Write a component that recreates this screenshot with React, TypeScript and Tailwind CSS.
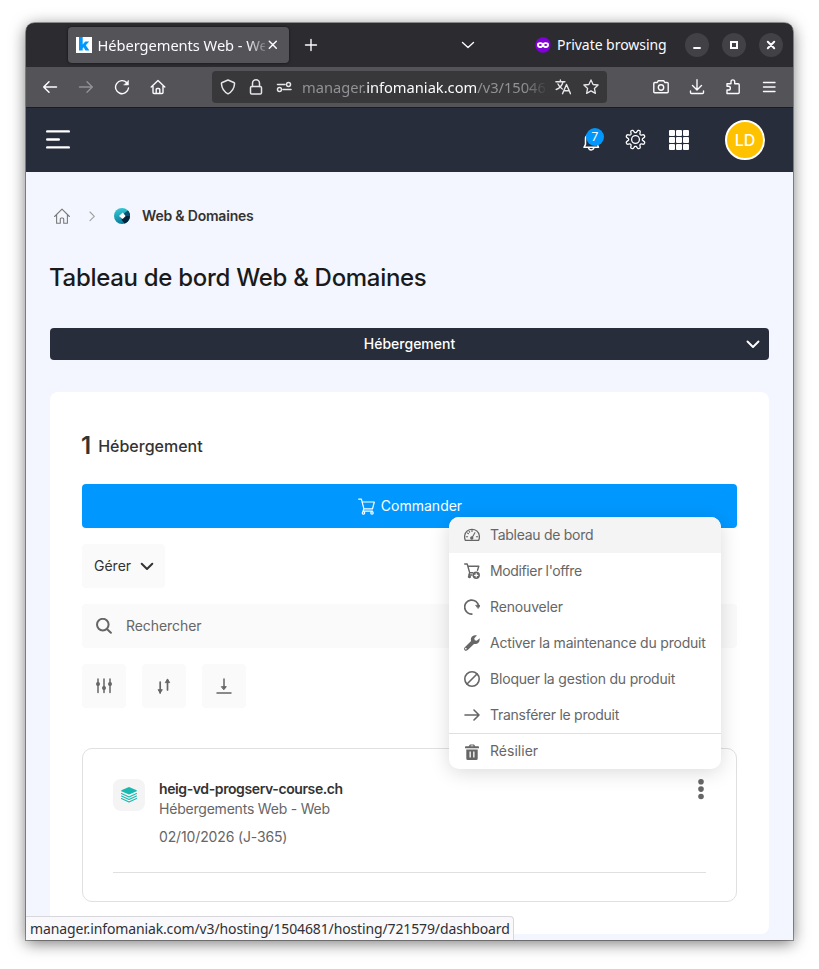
import type { ReactNode } from 'react';

type IconProps = { className?: string; children: ReactNode; size?: number; sw?: number };

function Icon({ className = '', children, size = 16, sw = 1.3 }: IconProps) {
  return (
    <svg
      width={size}
      height={size}
      viewBox={`0 0 ${size} ${size}`}
      fill="none"
      stroke="currentColor"
      strokeWidth={sw}
      strokeLinecap="round"
      strokeLinejoin="round"
      className={`shrink-0 ${className}`}
    >
      {children}
    </svg>
  );
}

function TabBar() {
  return (
    <div className="flex h-11 shrink-0 items-center bg-[#2c2b30] pl-[42px] text-[#fbfbfe]">
      <div className="flex h-9 w-[221px] items-center rounded bg-[#545358] pl-2 shadow-[0_0_3px_rgba(0,0,0,0.6)]">
        <svg width="16" height="16" viewBox="0 0 16 16" className="shrink-0">
          <rect width="16" height="16" fill="#fff" />
          <path d="M3 0h3.700v7.600L9.300 4.600h3.900L9.800 8.200l3.600 5.300H9.500L7.600 10.300l-.9.9v2.300H3z" fill="#0098ff" />
        </svg>
        <div className="ml-[5.500px] w-[167.500px] overflow-hidden whitespace-nowrap pb-px text-[14.67px] leading-5 tracking-[-0.050px] [mask-image:linear-gradient(to_right,black_149px,transparent_172px)]">
          Hébergements Web - Web
        </div>
        <Icon className="-mr-1" sw={1.5}>
          <path d="M4.300 4.300l7 7M11.300 4.300l-7 7" />
        </Icon>
      </div>
      <Icon className="ml-3.5" sw={1.4}>
        <path d="M8 2.500v11M2.500 8h11" />
      </Icon>
      <Icon className="ml-[141px]" sw={1.4}>
        <path d="M2.500 5.500L8 10.500l5.500-5" />
      </Icon>
      <svg width="16" height="16" viewBox="0 0 16 16" className="ml-[59px] shrink-0">
        <circle cx="8" cy="8" r="7.700" fill="#8000d7" />
        <path
          d="M8 6.200C6.800 4.900 2 4.400 2 7.700c0 3.900 4.400 4 6 2 1.600 2 6 1.900 6-2 0-3.300-4.800-2.800-6-1.500z"
          fill="#fff"
        />
        <ellipse cx="5.300" cy="7.900" rx="1.500" ry="1" fill="#8000d7" />
        <ellipse cx="10.700" cy="7.900" rx="1.500" ry="1" fill="#8000d7" />
      </svg>
      <span className="ml-1.5 w-32 whitespace-nowrap pb-px text-[14px] leading-5 tracking-[-0.040px]">Private browsing</span>
      <div className="flex gap-[13px]">
        <span className="flex size-6 items-center justify-center rounded-full bg-[#424146]">
          <Icon sw={2}><path d="M4.300 11h7.400" strokeLinecap="butt" /></Icon>
        </span>
        <span className="flex size-6 items-center justify-center rounded-full bg-[#424146]">
          <Icon sw={2}><path d="M5 5h6v6H5z" strokeLinejoin="miter" /></Icon>
        </span>
        <span className="flex size-6 items-center justify-center rounded-full bg-[#424146]">
          <Icon sw={2}><path d="M4.800 4.800l6.400 6.400M11.200 4.800l-6.400 6.400" /></Icon>
        </span>
      </div>
    </div>
  );
}

function Toolbar() {
  return (
    <div className="flex h-[41px] shrink-0 items-center border-b border-[#1c1b20] bg-[#545358] pl-4 text-[#fbfbfe]">
      <div className="flex w-[170px] gap-5">
        <Icon sw={1.500}><path d="M14.500 8H1.700M7 2.700L1.700 8 7 13.300" /></Icon>
        <Icon sw={1.400} className="text-[#929195]"><path d="M1.500 8h12.800M9 2.700L14.300 8 9 13.300" /></Icon>
        <Icon sw={1.400}>
          <path d="M12.800 3.700A6.500 6.500 0 1 0 14.500 9" />
          <path d="M14.500 1.500v4.500H10z" fill="currentColor" strokeWidth=".5" />
        </Icon>
        <Icon sw={1.400}>
          <path d="M1.200 8L8 1.600 14.800 8M3 7v6.500q0 1 1 1h8q1 0 1-1V7M6.200 14.500v-4q0-1 1-1h1.600q1 0 1 1v4" />
        </Icon>
      </div>
      <div className="flex h-8 w-[395px] items-center rounded bg-[#38373a] pl-2 text-[#e6e6ea]">
        <Icon sw={1.500}><path d="M8 1l6.300 2.700q.3 0 .2 1.300c-.3 4.500-2 7.500-6.500 9.800C3.500 12.500 1.800 9.500 1.500 5q-.1-1.300.2-1.300z" /></Icon>
        <Icon className="ml-3" sw={1.500}><rect x="2.500" y="7.500" width="11" height="7.500" rx="1.300" /><path d="M4.500 7.500V4.300a3.500 3.500 0 0 1 7 0v3.200" /></Icon>
        <Icon className="ml-3" sw={1.500}><path d="M1.500 5.500H9M7 10.500h8" /><circle cx="12.500" cy="5.500" r="2" /><circle cx="3.500" cy="10.500" r="2" /></Icon>
        <div className="ml-2.5 w-[245px] overflow-hidden whitespace-nowrap text-[14.67px] leading-5 text-[#929195] [mask-image:linear-gradient(to_right,black_222px,transparent_246px)]">
          manager.<span className="text-[#fbfbfe]">infomaniak.com</span>/v3/1504681
        </div>
        <Icon className="ml-2" sw={1.400}>
          <path d="M.9 2.700h9M5.400 1v1.700M8 3c-.8 3-3.300 6.200-6.800 7.500M3 5c1 2.300 2.600 4 4.300 5M7.500 14.700L11.500 5.500l4 9.200M9 11.700h5" />
        </Icon>
        <Icon className="ml-3" sw={1.300}>
          <path d="M8 .9l2.100 4.600 5 .5-3.700 3.400 1 5L8 11.900l-4.400 2.500 1-5L.9 6l5-.5z" />
        </Icon>
      </div>
      <div className="ml-[46px] flex gap-5">
        <Icon sw={1.400}>
          <path d="M1.800 3.500h2.500l1-1.800h5.400l1 1.800h2.500q1 0 1 1v8.200q0 1-1 1H1.800q-1 0-1-1V4.500q0-1 1-1z" /><circle cx="8" cy="8.500" r="2.700" />
        </Icon>
        <Icon sw={1.400}><path d="M8 .8v10M3.500 6.500L8 10.900l4.500-4.400M1.500 12v1.500q0 1 1 1h11q1 0 1-1V12" /></Icon>
        <Icon sw={1.400}>
          <path d="M2 14.500V11h1.500a1.800 1.800 0 0 0 0-3.700H2V4.800h4V2.700a1.800 1.800 0 0 1 3.700 0v2.100h3.500q1 0 1 1v7.700q0 1-1 1z" />
        </Icon>
        <Icon sw={1.400}><path d="M2.500 3.500h11.500M2.500 8h11.500M2.500 12.500h11.500" /></Icon>
      </div>
    </div>
  );
}

const gearPath = Array.from({ length: 128 }, (_, i) => {
  const a = (i / 128) * Math.PI * 2;
  const r = 8.300 + 1.450 * Math.tanh(1.800 * Math.cos(a * 8 + Math.PI)) / 0.950;
  return `${i ? 'L' : 'M'}${(10.500 + r * Math.sin(a)).toFixed(2)} ${(10.500 - r * Math.cos(a)).toFixed(2)}`;
}).join('') + 'Z';

function AppHeader() {
  return (
    <div className="flex h-16 shrink-0 items-center bg-[#282d3b] pl-5 text-white">
      <Icon size={24} sw={2.400}><path d="M1.200 3.400h21.600M1.200 11.500h11.600M1.200 19.400h21.600" /></Icon>
      <div className="relative ml-[512px] h-6 w-[23px]">
        <svg width="20" height="24" viewBox="0 0 20 24" fill="none" stroke="currentColor" strokeWidth="1.500" strokeLinejoin="round">
          <path d="M2 19.300h14.500l-1.300-3V11c0-3-2-5.500-5.500-5.500S3.500 8 3.500 11v5.300z" />
          <path d="M6.500 19.500c.3 3.200 5 3.200 5.500 0" />
        </svg>
        <span className="absolute left-1 -top-[0.500px] flex size-[18px] items-center justify-center rounded-full bg-[#0098ff] text-[12px]">7</span>
      </div>
      <Icon size={21} sw={1.300} className="mb-px ml-[19.500px]">
        <path d={gearPath} /><circle cx="10.500" cy="10.500" r="3.900" />
      </Icon>
      <div className="ml-[23.500px] grid grid-cols-3 gap-[1.500px]">
        {[0, 1, 2, 3, 4, 5, 6, 7, 8].map((n) => (
          <span key={n} className="size-[5.700px] rounded-[1px] bg-white" />
        ))}
      </div>
      <div className="ml-9 flex size-10 items-center justify-center rounded-full border-2 border-white bg-[#ffc200] text-base font-medium">LD</div>
    </div>
  );
}

function Breadcrumb() {
  return (
    <div className="flex h-5 items-center pl-1">
      <Icon className="text-[#7a7a7a]" sw={1.100}>
        <path d="M.6 8.500L8 1.100l7.400 7.400M2.600 7v8.200h3.700V11q0-1 1-1h1.400q1 0 1 1v4.200h3.700V7" />
      </Icon>
      <Icon className="ml-3.5 text-[#a0a0a0]" sw={1.100}><path d="M6 4l4.300 4.300L6 12.600" /></Icon>
      <svg width="16" height="16" viewBox="0 0 16 16" className="ml-3.5">
        <defs>
          <linearGradient id="domain-sphere" x1="0.300" y1="0" x2="0.500" y2="1">
            <stop offset="0" stopColor="#35c8d4" /><stop offset="1" stopColor="#087b9b" />
          </linearGradient>
        </defs>
        <circle cx="8" cy="8" r="8" fill="url(#domain-sphere)" />
        <path d="M8.500 8L14 2.800A8 8 0 0 1 10.500 15.600L7.600 12z" fill="#02233c" />
        <path d="M10 5.500L13.800 2.600Q16 5 16 8L12 8z" fill="#07526d" />
        <path d="M8.700 4.500l3 3.500-3 3-3.700-3z" fill="#fff" />
      </svg>
      <span className="ml-3 whitespace-nowrap text-sm font-semibold tracking-[-0.200px] text-[#333]">Web &amp; Domaines</span>
    </div>
  );
}

function MenuIcon({ kind }: { kind: string }) {
  switch (kind) {
    case 'gauge':
      return (
        <Icon sw={1.300}>
          <path d="M1.300 13.300Q.3 11 .7 8.500A7.400 7.400 0 0 1 15.300 8.500q.4 2.500-.6 4.800z" />
          <path d="M7.900 11l3-5.300M2.200 9.800h1.400M12.400 9.800h1.400M3.500 6l1 .7M8 3.200v1.300M5.200 4.200l.5 1" strokeWidth="1.100" />
          <circle cx="7.800" cy="11" r="1" fill="currentColor" />
        </Icon>
      );
    case 'cart':
      return (
        <Icon sw={1.400}>
          <path d="M.7 1h2.500l2.500 8.800h3M3.800 3.300h11l-1.300 4M5.700 9.800L4.800 12h3" />
          <circle cx="5.400" cy="13.700" r=".9" fill="currentColor" />
          <circle cx="12.200" cy="12.300" r="3.700" fill="currentColor" stroke="none" />
          <path d="M12.200 10.700v3.200M10.600 12.300h3.200" stroke="#fff" strokeWidth="1.200" />
        </Icon>
      );
    case 'renew':
      return (
        <Icon sw={1.700}>
          <path d="M8.500 15A7 7 0 1 1 14.600 7" strokeLinecap="butt" /><path d="M12 6.300l4.200.1-1.900 2.800z" fill="currentColor" strokeWidth=".8" />
        </Icon>
      );
    case 'wrench':
      return (
        <svg width="16" height="16" viewBox="0 0 16 16" fill="currentColor">
          <path fillRule="evenodd" d="M15.700 3.200l-3 2.600-2-.5-.4-2L12.900.5C10.700-.3 8.100.5 7.200 2.800c-.5 1.200-.4 2.200-.1 3.200L.8 12.200c-1 1-.9 2.300-.2 3 .8.8 2.200.8 3.100-.2L10 8.900c2.900.9 6.200-1 5.700-5.700zM2.100 14.500a.8.800 0 1 1 .1-1.500.8.800 0 0 1-.1 1.500z" />
        </svg>
      );
    case 'block':
      return <Icon sw={1.600}><circle cx="8" cy="8" r="7.200" /><path d="M13 3L3 13" /></Icon>;
    case 'arrow':
      return <Icon sw={1.600}><path d="M1 8h14M10 3l5 5-5 5" /></Icon>;
    default:
      return (
        <svg width="16" height="16" viewBox="0 0 16 16" fill="currentColor" className="mt-px">
          <path fillRule="evenodd" d="M2.300 5.400h11.400v9q0 1.600-1.600 1.600H3.900q-1.600 0-1.600-1.600zM5.500 7.500h1.300v6H5.500zm3.700 0h1.300v6H9.200zM1.700 2.300h3L6 .5h4l1.300 1.800h3q.7 0 .7 1v1H1v-1q0-1 .7-1zm4.700 0h3.200l-.5-.7H6.900z" />
        </svg>
      );
  }
}

const menuItems = [
  { kind: 'gauge', label: 'Tableau de bord', cls: 'tracking-[-0.280px]' },
  { kind: 'cart', label: "Modifier l'offre", cls: 'tracking-[-0.370px]' },
  { kind: 'renew', label: 'Renouveler', cls: 'tracking-[-0.150px]' },
  { kind: 'wrench', label: 'Activer la maintenance du produit', cls: 'tracking-[-0.200px]' },
  { kind: 'block', label: 'Bloquer la gestion du produit', cls: 'tracking-[-0.190px]' },
  { kind: 'arrow', label: 'Transférer le produit', cls: 'tracking-[-0.270px]' },
  { kind: 'trash', label: 'Résilier', cls: 'tracking-[0.020px]' },
];

function ContextMenu() {
  return (
    <div className="absolute left-[423px] top-[494px] w-[272px] overflow-hidden rounded-[10px] bg-white text-sm text-[#666] shadow-[0_3px_20px_rgba(0,0,0,0.150)]">
      {menuItems.map((m, i) => (
        <div
          key={m.kind}
          className={`flex h-9 items-center gap-2.5 whitespace-nowrap pl-[15px] ${i === 0 ? 'bg-[#f4f4f4]' : ''} ${i === 6 ? 'border-t border-[#e0e0e0] pb-px' : ''}`}
        >
          <MenuIcon kind={m.kind} />
          <span className={m.cls}>{m.label}</span>
        </div>
      ))}
    </div>
  );
}

function ProductCard() {
  return (
    <div className="mt-10 h-[154px] rounded-[10px] border border-[#e0e0e0] px-[30px] pt-[30px]">
      <div className="flex h-[94px] border-b border-[#e0e0e0]">
        <div className="flex size-8 items-center justify-center rounded-lg bg-[#f4f4f4] text-[#1ab9b0]">
          <Icon sw={1.100}>
            <path d="M8 0l7.700 3.300v1L8 7.600.3 4.300v-1z" fill="currentColor" stroke="none" />
            <path d="M.5 6.500L8 9.900l7.500-3.400M.5 9L8 12.400 15.500 9M.5 11.500L8 15l7.500-3.500" />
          </Icon>
        </div>
        <div className="ml-3.5 flex-1 text-sm text-[#666]">
          <div className="flex h-5 items-center font-semibold tracking-[-0.400px] text-[#333]">heig-vd-progserv-course.ch</div>
          <div className="flex h-5 items-center tracking-[-0.210px]">Hébergements Web - Web</div>
          <div className="mt-2 flex h-5 items-center tracking-[-0.140px]">02/10/2026 (J-365)</div>
        </div>
        <svg width="6" height="22" viewBox="0 0 6 22" fill="#666" className="mr-0.5 -mt-px">
          <circle cx="3" cy="3.700" r="2.800" />
          <circle cx="3" cy="11.100" r="2.800" />
          <circle cx="3" cy="18.500" r="2.800" />
        </svg>
      </div>
    </div>
  );
}

function Content() {
  return (
    <div className="h-[768px] bg-[#f3f6ff] px-6 pt-[34px]">
      <Breadcrumb />
      <h1 className="-ml-px mt-9 h-8 whitespace-nowrap text-2xl font-medium leading-8 tracking-[-0.300px] text-[#1a1a1a]">
        Tableau de bord Web &amp; Domaines
      </h1>
      <div className="mt-[34px] flex h-8 items-center rounded bg-[#282d3b] pr-2 text-sm font-medium text-white">
        <span className="flex-1 pl-6 text-center">Hébergement</span>
        <Icon sw={1.900}><path d="M2.500 5.500L8 11l5.500-5.500" /></Icon>
      </div>
      <div className="mt-8 h-[542px] rounded-lg bg-white px-8 pt-10">
        <div className="flex h-7 items-center text-[#333]">
          <span className="-ml-px text-2xl font-semibold leading-7">1</span>
          <span className="ml-[7px] text-base font-medium">Hébergement</span>
        </div>
        <button className="mt-6 flex h-11 w-full items-center justify-center rounded bg-[#0098ff] pl-px text-sm text-white">
          <Icon sw={1.200} size={17}>
            <path d="M.7 1.200h2.700l2.500 9.600h8.700M4 4h12.300l-1.800 6.800M5.900 10.800L5 13.200h9.500" />
            <circle cx="5.500" cy="14.900" r="1.200" /><circle cx="14" cy="14.900" r="1.200" />
          </Icon>
          <span className="ml-1.5">Commander</span>
        </button>
        <button className="mt-4 flex h-11 w-[83px] items-center rounded bg-[#fafafa] pl-3 text-sm text-[#333]">
          Gérer
          <Icon className="ml-2" sw={2}><path d="M2.700 5.800L8 11l5.300-5.200" /></Icon>
        </button>
        <div className="mt-4 flex h-11 items-center rounded bg-[#fafafa] pl-3.5 text-sm text-[#666]">
          <Icon sw={2}><circle cx="6.800" cy="6.600" r="5.800" /><path d="M11.200 11.200l3.700 3.500" /></Icon>
          <span className="ml-3.5 tracking-[-0.070px]">Rechercher</span>
        </div>
        <div className="mt-4 flex gap-4 text-[#666]">
          <span className="flex size-11 items-center justify-center rounded bg-[#fafafa]">
            <Icon sw={1.500}>
              <path d="M2 1v13.500M8 1v13.500M14 1v13.500" />
              <g fill="currentColor" stroke="none"><circle cx="2" cy="6" r="2" /><circle cx="8" cy="10" r="2" /><circle cx="14" cy="6" r="2" /></g>
            </Icon>
          </span>
          <span className="flex size-11 items-center justify-center rounded bg-[#fafafa]">
            <Icon sw={1.700}>
              <path d="M4.200 4v11M11.500 1.500V12" />
              <path d="M2.300 12l1.900 3 1.900-3zM9.500 4.300l2-3 2 3z" fill="currentColor" strokeWidth="1" />
            </Icon>
          </span>
          <span className="flex size-11 items-center justify-center rounded bg-[#fafafa]">
            <Icon sw={1.500}><path d="M8 1v9M1 15h14" /><path d="M5.700 8.700h4.600L8 11.500z" fill="currentColor" strokeWidth="1" /></Icon>
          </span>
        </div>
        <ProductCard />
      </div>
    </div>
  );
}

export default function App() {
  return (
    <div className="h-[969px] w-[819px] overflow-hidden bg-white pl-[26px] pt-[23px]">
      <div className="h-[917px] w-[767px] rounded-t-[9px] shadow-[0_0_0_1px_rgba(0,0,0,0.350),0_3px_16px_rgba(0,0,0,0.550)]">
        <div className="relative flex h-full flex-col overflow-hidden rounded-t-[8px] font-['Inter',sans-serif]">
          <div className="font-['Noto_Sans',sans-serif]">
            <TabBar />
            <Toolbar />
          </div>
          <AppHeader />
          <Content />
          <ContextMenu />
          <div className="absolute bottom-0 left-0 flex h-6 w-[488px] items-center whitespace-nowrap rounded-tr border-r border-t border-[#d8d8dc] bg-[#f9f9fb] pl-1 pt-px font-['Noto_Sans',sans-serif] text-[14px] leading-5 tracking-[-0.130px] text-[#303036]">
            manager.infomaniak.com/v3/hosting/1504681/hosting/721579/dashboard
          </div>
        </div>
      </div>
    </div>
  );
}
